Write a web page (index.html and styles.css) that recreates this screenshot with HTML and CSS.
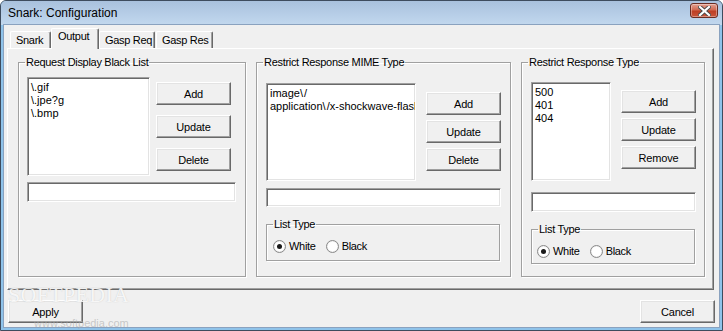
FILE: index.html
```html
<!DOCTYPE html>
<html>
<head>
<meta charset="utf-8">
<title>Snark: Configuration</title>
<link rel="stylesheet" href="styles.css">
</head>
<body>
<div class="window">
  <div class="titlebar">
    <span class="title">Snark: Configuration</span>
    <button class="close" aria-label="Close">
      <svg width="13" height="10" viewBox="0 0 13 10">
        <path d="M2 1 L11 9 M11 1 L2 9" stroke="#4a4a4a" stroke-width="4" stroke-linecap="square"/>
        <path d="M2 1 L11 9 M11 1 L2 9" stroke="#ffffff" stroke-width="2.2" stroke-linecap="square"/>
      </svg>
    </button>
  </div>
  <div class="client">
    <div class="tabs">
      <div class="tab tab-snark">Snark</div>
      <div class="tab tab-output active">Output</div>
      <div class="tab tab-req">Gasp Req</div>
      <div class="tab tab-res">Gasp Res</div>
    </div>
    <div class="panel">
      <fieldset class="group g1">
        <legend>Request Display Black List</legend>
        <div class="gbody">
          <div class="row">
            <div class="listbox">
              <div>\.gif</div>
              <div>\.jpe?g</div>
              <div>\.bmp</div>
            </div>
            <div class="btncol">
              <button class="btn">Add</button>
              <button class="btn">Update</button>
              <button class="btn">Delete</button>
            </div>
          </div>
          <div class="field"></div>
        </div>
      </fieldset>
      <fieldset class="group g2">
        <legend>Restrict Response MIME Type</legend>
        <div class="gbody">
          <div class="row">
            <div class="listbox">
              <div>image\<span class="sl">/</span></div>
              <div>application\<span class="sl">/</span>x-shockwave-flash</div>
            </div>
            <div class="btncol">
              <button class="btn">Add</button>
              <button class="btn">Update</button>
              <button class="btn">Delete</button>
            </div>
          </div>
          <div class="field"></div>
          <fieldset class="subgroup">
            <legend>List Type</legend>
            <div class="radios">
              <span class="radio checked"></span><span class="rlabel">White</span>
              <span class="radio"></span><span class="rlabel">Black</span>
            </div>
          </fieldset>
        </div>
      </fieldset>
      <fieldset class="group g3">
        <legend>Restrict Response Type</legend>
        <div class="gbody">
          <div class="row">
            <div class="listbox">
              <div>500</div>
              <div>401</div>
              <div>404</div>
            </div>
            <div class="btncol">
              <button class="btn">Add</button>
              <button class="btn">Update</button>
              <button class="btn">Remove</button>
            </div>
          </div>
          <div class="field"></div>
          <fieldset class="subgroup">
            <legend>List Type</legend>
            <div class="radios">
              <span class="radio checked"></span><span class="rlabel">White</span>
              <span class="radio"></span><span class="rlabel">Black</span>
            </div>
          </fieldset>
        </div>
      </fieldset>
    </div>
    <div class="footer">
      <button class="btn">Apply</button>
      <button class="btn">Cancel</button>
    </div>
    <div class="watermark">
      <span class="wm-big">SOFTPEDIA</span>
      <span class="wm-small">www.softpedia.com</span>
    </div>
  </div>
</div>
</body>
</html>
```
FILE: styles.css
```css
html, body {
  margin: 0;
  padding: 0;
  background: #ffffff;
}
body {
  font-family: "Liberation Sans", Arial, sans-serif;
  font-size: 11px;
  letter-spacing: -0.3px;
  color: #000;
}
.window {
  position: relative;
  width: 723px;
  height: 331px;
  box-sizing: border-box;
  border: 1px solid #3e4c5e;
  border-radius: 6px 6px 0 0;
  background: #8fc3ea;
  padding: 0 3px 3px 3px;
  display: flex;
  flex-direction: column;
  overflow: hidden;
}
.titlebar {
  height: 24px;
  flex: none;
  display: flex;
  align-items: center;
  justify-content: space-between;
  margin: 0 -3px;
  padding: 0 4px 0 7px;
  background: linear-gradient(#a9c1dd, #b8cfe8 60%, #c2d8ee);
}
.title {
  font-family: "Liberation Sans", Arial, sans-serif;
  font-size: 12px;
  letter-spacing: 0;
  color: #000;
  margin-top: -1px;
}
.close {
  width: 28px;
  height: 15px;
  margin-top: -5px;
  padding: 0;
  border: 1px solid #6a2c22;
  border-radius: 3px;
  background: linear-gradient(#e3a192, #d16a52 45%, #bd3f25 55%, #c8553b);
  box-shadow: inset 0 0 0 1px rgba(255,255,255,0.35);
  display: flex;
  align-items: center;
  justify-content: center;
}
.client {
  position: relative;
  flex: 1;
  background: #f0f0f0;
  box-shadow: 0 0 0 1px #8aa2bf;
  display: flex;
  flex-direction: column;
  padding-top: 3px;
}
.tabs {
  height: 20px;
  display: flex;
  align-items: flex-end;
  padding-left: 6px;
  position: relative;
  z-index: 1;
}
.tab {
  box-sizing: border-box;
  height: 17px;
  border: 1px solid #fff;
  border-bottom: none;
  border-right: 1px solid #696969;
  box-shadow: inset -1px 0 0 #a0a0a0;
  border-radius: 2px 2px 0 0;
  background: #f0f0f0;
  padding: 2px 0 0 5px;
  line-height: 13px;
  white-space: nowrap;
  overflow: hidden;
}
.tab-snark { width: 41px; }
.tab-output {
  width: 48px;
  height: 21px;
  margin-bottom: -1px;
  padding-top: 1px;
  padding-left: 6px;
}
.tab-req { width: 56px; }
.tab-res { width: 57px; margin-left: 1px; }
.panel {
  box-sizing: border-box;
  height: 242px;
  margin: 0 5px 0 3px;
  border: 1px solid;
  border-color: #fff #696969 #696969 #fff;
  box-shadow: inset -1px -1px 0 #a0a0a0;
  display: flex;
  align-items: stretch;
  gap: 10px;
  padding: 7px 8px 12px 10px;
}
.group {
  margin: 0;
  padding: 0;
  min-width: 0;
  border: 1px solid #a0a0a0;
  box-shadow: inset 1px 1px 0 #fff, 1px 1px 0 #fff;
  box-sizing: border-box;
}
.group > legend, .subgroup > legend {
  margin-left: 6px;
  padding: 0 1px;
  line-height: 13px;
  font-size: 11px;
  white-space: nowrap;
}
.g1 { width: 228px; }
.g2 { width: 255px; }
.g3 { width: 184px; }
.gbody {
  display: flex;
  flex-direction: column;
  align-items: flex-start;
}
.row {
  display: flex;
  align-items: flex-start;
}
.listbox {
  box-sizing: border-box;
  background: #fff;
  border: 1px solid;
  border-color: #a0a0a0 #fff #fff #a0a0a0;
  box-shadow: inset 1px 1px 0 #696969, inset -1px -1px 0 #e3e3e3;
  padding: 3px 0 0 3px;
  line-height: 13px;
  letter-spacing: 0;
  white-space: nowrap;
  overflow: hidden;
}
.sl { margin-left: 1px; }
.field {
  box-sizing: border-box;
  background: #fff;
  border: 1px solid;
  border-color: #a0a0a0 #fff #fff #a0a0a0;
  box-shadow: inset 1px 1px 0 #696969, inset -1px -1px 0 #e3e3e3;
  height: 20px;
}
.btncol {
  display: flex;
  flex-direction: column;
}
.btn {
  box-sizing: border-box;
  width: 75px;
  height: 23px;
  padding: 0;
  background: #f0f0f0;
  border: 1px solid;
  border-color: #fff #696969 #696969 #fff;
  box-shadow: inset -1px -1px 0 #a0a0a0, inset 1px 1px 0 #e3e3e3;
  font-family: "Liberation Sans", Arial, sans-serif;
  font-size: 11px;
  letter-spacing: -0.2px;
  color: #000;
}

/* group 1 */
.g1 .gbody { padding: 8px 0 0 8px; }
.g1 .listbox { width: 123px; height: 99px; }
.g1 .btncol { margin: 5px 0 0 6px; gap: 10px; }
.g1 .field { width: 209px; margin-top: 6px; }

/* group 2 */
.g2 .gbody { padding: 14px 0 0 9px; }
.g2 .listbox { width: 150px; height: 98px; }
.g2 .btncol { margin: 9px 0 0 10px; gap: 5px; }
.g2 .field { width: 235px; height: 19px; margin-top: 7px; }
.g2 .subgroup { width: 234px; margin-top: 11px; }
.g2 .radios { padding: 9px 0 7px 6px; }

/* group 3 */
.g3 .gbody { padding: 13px 0 0 9px; }
.g3 .listbox { width: 80px; height: 99px; }
.g3 .btncol { margin: 8px 0 0 10px; gap: 5px; }
.g3 .field { width: 165px; margin-top: 11px; }
.g3 .subgroup { width: 164px; margin-top: 11px; }
.g3 .radios { padding: 9px 0 5px 5px; }

.subgroup {
  margin: 0;
  padding: 0;
  min-width: 0;
  box-sizing: border-box;
  border: 1px solid #a0a0a0;
  box-shadow: inset 1px 1px 0 #fff, 1px 1px 0 #fff;
}
.radios {
  display: flex;
  align-items: center;
  height: 13px;
}
.radio {
  box-sizing: border-box;
  width: 13px;
  height: 13px;
  border-radius: 50%;
  border: 1px solid #8a8a8a;
  background: radial-gradient(circle, #ffffff 0 55%, #e4e4e4 75%);
  display: inline-flex;
  align-items: center;
  justify-content: center;
  margin-right: 3px;
}
.radio.checked::after {
  content: "";
  width: 5px;
  height: 5px;
  border-radius: 50%;
  background: #1a1a1a;
}
.rlabel { margin-right: 10px; line-height: 13px; }
.footer {
  display: flex;
  justify-content: space-between;
  padding: 10px 4px 0 4px;
}
.watermark {
  position: absolute;
  left: 4px;
  top: 261px;
  width: 130px;
  height: 42px;
  pointer-events: none;
}
.wm-big {
  position: absolute;
  left: 0;
  top: 0;
  font-family: "Liberation Serif", "Times New Roman", serif;
  font-size: 22px;
  line-height: 17px;
  letter-spacing: 0.3px;
  color: rgba(255,255,255,0.85);
  text-shadow: 0 0 1px rgba(150,150,150,0.5);
}
.wm-small {
  position: absolute;
  left: 26px;
  top: 33px;
  font-family: "Liberation Sans", Arial, sans-serif;
  font-size: 11px;
  line-height: 9px;
  letter-spacing: 0;
  color: rgba(170,170,170,0.6);
}
```
